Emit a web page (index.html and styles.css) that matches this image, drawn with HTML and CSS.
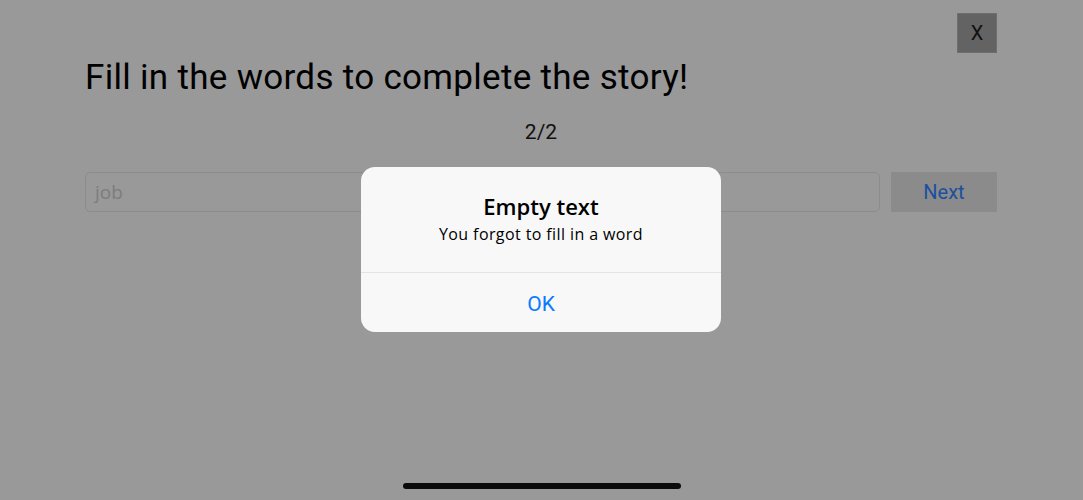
FILE: index.html
```html
<!DOCTYPE html>
<html>
<head>
<meta charset="utf-8">
<link rel="stylesheet" href="styles.css">
</head>
<body>
<div class="screen">
  <div class="topbar">
    <button class="close">X</button>
  </div>
  <h1 class="title">Fill in the words to complete the story!</h1>
  <div class="counter">2/2</div>
  <div class="entry">
    <div class="field">job</div>
    <button class="next">Next</button>
  </div>
</div>
<div class="alert">
  <div class="alert-body">
    <div class="alert-title">Empty text</div>
    <div class="alert-msg">You forgot to fill in a word</div>
  </div>
  <div class="alert-action">OK</div>
</div>
<div class="home-indicator"></div>
</body>
</html>
```
FILE: styles.css
```css
html, body {
  margin: 0;
  padding: 0;
  width: 1083px;
  height: 500px;
  overflow: hidden;
  background: #999999;
  font-family: Roboto, "Liberation Sans", sans-serif;
  position: relative;
}
.screen {
  padding: 13px 86px 0 85px;
  display: flex;
  flex-direction: column;
}
.topbar {
  display: flex;
  justify-content: flex-end;
}
.close {
  width: 40px;
  height: 40px;
  background: #636363;
  border: 1px solid #6e6e6e;
  color: #111;
  font-family: Roboto, "Liberation Sans", sans-serif;
  font-size: 20px;
  padding: 0;
  margin: 0;
  display: flex;
  align-items: center;
  justify-content: center;
}
.title {
  margin: 3px 0 0;
  font-weight: 400;
  font-size: 35px;
  line-height: 44px;
  color: #000;
  letter-spacing: 0.3px;
}
.counter {
  margin-top: 19px;
  text-align: center;
  font-size: 21px;
  line-height: 26px;
  color: #111;
}
.entry {
  margin-top: 27px;
  display: flex;
  gap: 11px;
  height: 40px;
}
.field {
  flex: 1;
  border: 1px solid #8c8c8c;
  border-radius: 5px;
  display: flex;
  align-items: center;
  padding-left: 9px;
  font-family: "Open Sans", sans-serif;
  font-size: 19px;
  color: #7d7d7d;
}
.next {
  width: 106px;
  background: #8b8b8b;
  border: none;
  padding: 0;
  margin: 0;
  color: #1b4f9f;
  font-family: Roboto, "Liberation Sans", sans-serif;
  font-size: 20px;
}
.alert {
  position: absolute;
  left: 361px;
  top: 167px;
  width: 360px;
  height: 165px;
  background: #f8f8f8;
  border-radius: 14px;
  display: flex;
  flex-direction: column;
  overflow: hidden;
}
.alert-body {
  height: 106px;
  border-bottom: 1px solid #e3e3e3;
  display: flex;
  flex-direction: column;
  align-items: center;
  padding-top: 25px;
  box-sizing: border-box;
}
.alert-title {
  font-family: "Open Sans", sans-serif;
  font-weight: 600;
  font-size: 22px;
  line-height: 28px;
  color: #000;
}
.alert-msg {
  margin-top: 3px;
  font-family: "Open Sans", sans-serif;
  font-size: 16px;
  line-height: 22px;
  letter-spacing: 0.4px;
  color: #000;
}
.alert-action {
  flex: 1;
  display: flex;
  align-items: center;
  justify-content: center;
  padding-top: 3px;
  color: #0a7aff;
  font-size: 21px;
}
.home-indicator {
  position: absolute;
  left: 403px;
  top: 483px;
  width: 278px;
  height: 6px;
  border-radius: 3px;
  background: #0b0b0b;
}
```
